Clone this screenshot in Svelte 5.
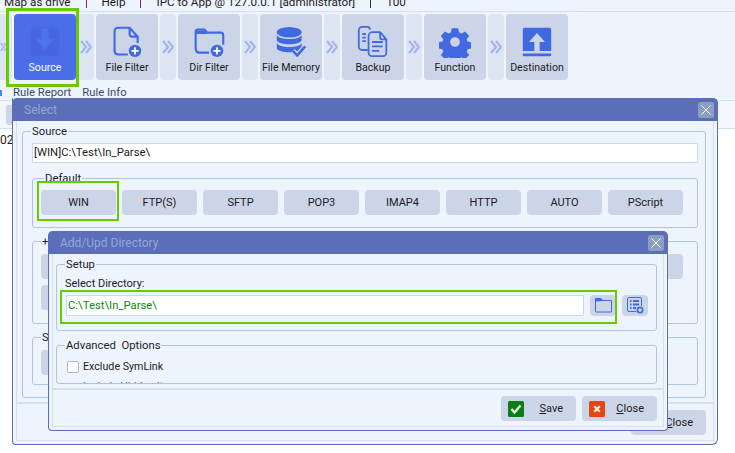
<script lang="ts">
	// Pipeline tiles along the top of the rule editor
	const tiles = [
		{ id: 'source', label: 'Source', active: true },
		{ id: 'file', label: 'File Filter' },
		{ id: 'dir', label: 'Dir Filter' },
		{ id: 'memory', label: 'File Memory' },
		{ id: 'backup', label: 'Backup' },
		{ id: 'function', label: 'Function' },
		{ id: 'destination', label: 'Destination' }
	];

	const protocols = ['WIN', 'FTP(S)', 'SFTP', 'POP3', 'IMAP4', 'HTTP', 'AUTO', 'PScript'];

	let excludeSymlink = $state(false);
</script>

{#snippet chevron()}
	<svg width="12" height="14" viewBox="0 0 12 14" fill="none" stroke="#9fb3ee" stroke-width="2">
		<path d="M1 1l5 6-5 6M6 1l5 6-5 6" />
	</svg>
{/snippet}

{#snippet closeX()}
	<svg width="10" height="10" viewBox="0 0 10 10" stroke="#fff" stroke-width="1" fill="none">
		<path d="M0.5 0.5l9 9M9.5 0.5l-9 9" />
	</svg>
{/snippet}

<div class="page">
	<div class="top">
		<div class="menu">
			<span>Map as drive</span><i class="sep"></i>
			<span>Help</span><i class="sep"></i>
			<span>IPC to App @ 127.0.0.1 [administrator]</span><i class="sep dark"></i>
			<span>100</span>
		</div>

		<div class="toolbar">
			<div class="link first">{@render chevron()}</div>
			{#each tiles as tile, i}
				<div class="tile" class:active={tile.active}>
					<svg class="icon" width="32" height="32" viewBox="0 0 36 36">
						{#if tile.id === 'source'}
							<path fill="#4766de" d="M5 1h26v1H5zM5 3h26a3 3 0 0 1 3 3v25a3 3 0 0 1-3 3H5a3 3 0 0 1-3-3V6a3 3 0 0 1 3-3z" />
							<path fill="#4f73ea" d="M14 3h8v12h6L18 27 8 15h6z" />
						{:else if tile.id === 'file'}
							<path fill="none" stroke="#4169e1" stroke-width="2.400" d="M8 2h13l9 10v7M21 2v7a3 3 0 0 0 3 3h6M8 2a4 4 0 0 0-4 4v22a4 4 0 0 0 4 4h11" />
							<circle cx="27" cy="28" r="7" fill="#4169e1" />
							<path stroke="#fff" stroke-width="2" d="M23 28h8M27 24v8" />
						{:else if tile.id === 'dir'}
							<path fill="none" stroke="#4169e1" stroke-width="2.400" d="M18 30H7a4 4 0 0 1-4-4V6a2 2 0 0 1 2-2h8l3 3.500h15a3 3 0 0 1 3 3V21" />
							<path fill="#4169e1" d="M3 5h10l3 4H3z" />
							<circle cx="27" cy="28" r="7" fill="#4169e1" />
							<path stroke="#fff" stroke-width="2" d="M23 28h8M27 24v8" />
						{:else if tile.id === 'memory'}
							<ellipse cx="16" cy="7" rx="14" ry="6" fill="#4169e1" />
							<path fill="#4169e1" d="M2 10c2 6 26 6 28 0v6c-2 6-26 6-28 0zM2 19c2 6 26 6 28 0v6c-2 6-26 6-28 0z" />
							<path fill="none" stroke="#ccd5e7" stroke-width="6" d="M20 28l5 5 9-10" />
							<path fill="none" stroke="#4169e1" stroke-width="3" d="M20 28l5 5 9-10" />
						{:else if tile.id === 'backup'}
							<path fill="none" stroke="#4169e1" stroke-width="2" d="M12 27H6a4 4 0 0 1-4-4V5a4 4 0 0 1 4-4h7l2 3" />
							<path fill="none" stroke="#4169e1" stroke-width="2" d="M6 9h4M6 13h4M6 17h4" />
							<path fill="none" stroke="#4169e1" stroke-width="2" d="M17 7h9l7 8v15a4 4 0 0 1-4 4H17a4 4 0 0 1-4-4V11a4 4 0 0 1 4-4zM26 8v5a2 2 0 0 0 2 2h5" />
							<path fill="none" stroke="#4169e1" stroke-width="2" d="M17 18h12M17 23h12M17 28h8" />
						{:else if tile.id === 'function'}
							<path fill="#4169e1" fill-rule="evenodd" d="M14 1h8l1 5 3 1.500 4.500-2.500 5 5.500-3 4 1 3 4.500 1v7.500l-4.500 1-1 3 3 4-5 5.500-4.500-2.500-3 1.500-1 5h-8l-1-5-3-1.500-4.500 2.500-5-5.500 3-4-1-3-4.500-1v-7.500l4.500-1 1-3-3-4 5-5.500 4.500 2.500 3-1.500zM18 12a6 6 0 1 0 0 12 6 6 0 0 0 0-12z" transform="translate(1.600 1.600) scale(.91)" />
						{:else}
							<path fill="#4169e1" fill-rule="evenodd" d="M4 2h28a2 2 0 0 1 2 2v24H21V18h6L18 8 9 18h6v10H2V4a2 2 0 0 1 2-2z" />
							<path fill="#4169e1" d="M2 31h32v1.500a1.500 1.500 0 0 1-1.500 1.500h-29A1.500 1.500 0 0 1 2 32.500z" />
						{/if}
					</svg>
					<span>{tile.label}</span>
				</div>
				{#if i < tiles.length - 1}
					<div class="link">{@render chevron()}</div>
				{/if}
			{/each}
		</div>

		<div class="tabs">
			<span class="tab-edge"></span>
			<span>Rule Report</span>
			<span>Rule Info</span>
		</div>
	</div>

	<div class="subbar"><span class="sub-btn"></span></div>
	<div class="log">02</div>

	<!-- Green boxes are call-outs drawn over the screenshot -->
	<div class="mark mark-source"></div>

	<section class="dialog select">
		<header>
			<span>Select</span>
			<button type="button" class="x">{@render closeX()}</button>
		</header>
		<div class="frame">
			<div class="content">
				<div class="group outer">
					<span class="legend">Source</span>
					<div class="input source-input">[WIN]C:\Test\In_Parse\</div>

					<div class="group default">
						<span class="legend">Default</span>
						<div class="proto-row">
							{#each protocols as p}
								<button type="button" class="btn proto">{p}</button>
							{/each}
						</div>
					</div>

					<div class="group plus">
						<span class="legend">+</span>
						<div class="proto-row">
							{#each protocols as p}
								<span class="btn proto"></span>
							{/each}
						</div>
						<div class="proto-row second"><span class="btn proto"></span></div>
					</div>

					<div class="group third">
						<span class="legend">S</span>
						<div class="proto-row"><span class="btn proto"></span></div>
					</div>
				</div>
			</div>
			<footer>
				<button type="button" class="btn wide"><span class="caption"><u>C</u>lose</span></button>
			</footer>
		</div>
		<div class="mark mark-win"></div>
	</section>

	<section class="dialog directory">
		<header>
			<span>Add/Upd Directory</span>
			<button type="button" class="x">{@render closeX()}</button>
		</header>
		<div class="frame">
			<div class="content">
				<div class="group setup">
					<span class="legend">Setup</span>
					<div class="field-label">Select Directory:</div>
					<div class="dir-row">
						<div class="input dir-input">C:\Test\In_Parse\</div>
						<button type="button" class="btn square">
							<svg width="17" height="15" viewBox="0 0 17 15" fill="#ccd5e7" stroke="#4169e1" stroke-width="1">
								<path d="M.5 2.500h15.500a.5.5 0 0 1 .5.5v11H1a.5.5 0 0 1-.5-.5z" />
								<path fill="#4169e1" d="M.5 3V.5h5.500l1.500 2z" />
							</svg>
						</button>
						<button type="button" class="btn square">
							<svg width="17" height="17" viewBox="0 0 17 17" fill="none" stroke="#4169e1" stroke-width="1">
								<path d="M9 14.500H2a1.500 1.500 0 0 1-1.500-1.500V2A1.500 1.500 0 0 1 2 .5h11A1.500 1.500 0 0 1 14.500 2v7" />
								<path stroke-width="2" d="M3 4h1.500M6 4h6M3 7.500h1.500M6 7.500h6M3 11h1.500M6 11h3" />
								<circle cx="13" cy="13" r="3.500" fill="#4169e1" stroke="none" />
								<path stroke="#fff" d="M11 13h4M13 11v4" />
							</svg>
						</button>
					</div>
				</div>

				<div class="group advanced">
					<span class="legend">Advanced&nbsp; Options</span>
					<div class="rows">
						<label class="check">
							<input type="checkbox" bind:checked={excludeSymlink} />
							<span>Exclude SymLink</span>
						</label>
						<div class="check clipped">Include Hidden Items</div>
					</div>
				</div>
			</div>
			<footer>
				<button type="button" class="btn wide">
					<svg class="state" width="16" height="16" viewBox="0 0 16 16">
						<rect width="16" height="16" rx="1.500" fill="#0a7d14" />
						<path d="M3.500 8l3 3.500 6-7" fill="none" stroke="#e6efe6" stroke-width="2.400" />
					</svg>
					<span class="caption"><u>S</u>ave</span>
				</button>
				<button type="button" class="btn wide">
					<svg class="state" width="16" height="16" viewBox="0 0 16 16">
						<rect width="16" height="16" rx="1.500" fill="#e4460f" />
						<path d="M5.200 5.200l5.600 5.600M10.800 5.200l-5.600 5.600" fill="none" stroke="#f6e6e0" stroke-width="2.200" />
					</svg>
					<span class="caption"><u>C</u>lose</span>
				</button>
			</footer>
		</div>
		<div class="mark mark-dir"></div>
	</section>
</div>

<style>
	:global(body) {
		margin: 0;
		background: #fff;
	}

	.page {
		position: relative;
		width: 735px;
		height: 453px;
		overflow: hidden;
		background: #fff;
		font-family: Roboto, 'Liberation Sans', sans-serif;
		font-size: 11px;
		color: #1c1c1c;
	}

	.top {
		background: #eef4fc;
	}

	.menu {
		height: 11px;
		display: flex;
		align-items: flex-end;
		padding-left: 4px;
		overflow: hidden;
		border-bottom: 1px solid #d3e0f0;
		line-height: 16px;
		font-size: 11.7px;
	}

	.menu span {
		flex: none;
		padding-bottom: 1px;
	}

	.sep {
		flex: none;
		width: 1px;
		height: 8px;
		margin: 0 15px 3px;
		background: #7a2a5a;
	}

	.sep.dark {
		background: #333;
	}

	.toolbar {
		display: flex;
		gap: 2px;
		height: 66px;
		margin-top: 2px;
	}

	.link {
		width: 16px;
		display: flex;
		align-items: center;
		justify-content: center;
		background: #dde4f2;
		border-radius: 4px;
	}

	.link.first {
		width: 12px;
		box-sizing: border-box;
		padding-right: 4px;
		justify-content: flex-end;
		border-radius: 0 4px 4px 0;
	}

	.tile {
		width: 62px;
		display: flex;
		flex-direction: column;
		align-items: center;
		padding-top: 12px;
		box-sizing: border-box;
		background: #ccd5e7;
		border-radius: 4px;
		white-space: nowrap;
		font-size: 10.6px;
		line-height: 15px;
	}

	.tile.active {
		background: #4a6ee8;
		color: #fff;
	}

	.icon {
		flex: none;
		margin-bottom: 2px;
	}

	.tabs {
		height: 20px;
		box-sizing: border-box;
		padding-top: 6px;
		display: flex;
		gap: 11px;
		padding-left: 13px;
		color: #3b4a66;
		line-height: 14px;
		font-size: 11.3px;
	}

	.tab-edge {
		position: absolute;
		left: 0;
		top: 90px;
		width: 2px;
		height: 6px;
		background: #3d8bf0;
	}

	.subbar {
		height: 29px;
		box-sizing: border-box;
		background: #f3f7fd;
		border-top: 1px solid #d3e0f0;
		border-bottom: 1px solid #d3e0f0;
		padding: 4px 0 0 6px;
	}

	.sub-btn {
		display: block;
		width: 30px;
		height: 20px;
		background: #ccd5e7;
		border-radius: 3px;
	}

	.log {
		padding-top: 3px;
		line-height: 16px;
		font-size: 12px;
	}

	.mark {
		position: absolute;
		box-sizing: border-box;
		border: 2px solid #66cc00;
		pointer-events: none;
	}

	.mark-source {
		left: 6px;
		top: 8px;
		width: 73px;
		height: 79px;
		border-width: 3px;
	}

	.mark-win {
		left: 24px;
		top: 83px;
		width: 82px;
		height: 40px;
	}

	.mark-dir {
		left: 11px;
		top: 59px;
		width: 557px;
		height: 34px;
	}

	/* Windows stacked on the desktop of the app */
	.dialog {
		position: absolute;
		box-sizing: border-box;
		display: flex;
		flex-direction: column;
		background: #eef4fc;
		border: 1px solid #5a6eb9;
		border-top: 0;
		border-radius: 0 6px 6px 4px;
	}

	.select {
		left: 12px;
		top: 98px;
		width: 706px;
		height: 347px;
	}

	.directory {
		left: 48px;
		top: 231px;
		width: 620px;
		height: 200px;
		border-radius: 5px 6px 4px 4px;
	}

	header {
		flex: none;
		height: 23px;
		margin: 0 -1px;
		padding: 0 4px 0 12px;
		display: flex;
		align-items: center;
		justify-content: space-between;
		background: #5a6eb9;
		border-radius: 5px 5px 0 0;
		color: #98a6d6;
		font-size: 12px;
	}

	.x {
		width: 16px;
		height: 16px;
		padding: 0;
		border: 0;
		border-radius: 2px;
		display: flex;
		align-items: center;
		justify-content: center;
		background: #8d9fc0;
	}

	.frame {
		flex: 1;
		min-height: 0;
		margin: 0 3px 3px;
		display: flex;
		flex-direction: column;
		border-left: 1px solid #d3e0f0;
		border-right: 1px solid #d3e0f0;
		border-bottom: 1px solid #d3e0f0;
	}

	.content {
		flex: 1;
		min-height: 0;
		padding: 10px 6px 0 3px;
	}

	.select .content {
		padding: 10px 7px 0 5px;
	}

	footer {
		flex: none;
		display: flex;
		justify-content: flex-end;
		gap: 6px;
		height: 38px;
		box-sizing: border-box;
		padding: 6px 6px 0 0;
		border-top: 2px solid #d3e0f0;
	}

	.select footer {
		padding-right: 7px;
	}

	.group {
		position: relative;
		box-sizing: border-box;
		border: 1px solid #b0c4de;
		border-radius: 3px;
	}

	.legend {
		position: absolute;
		left: 8px;
		top: -8px;
		padding: 0 1px;
		background: #eef4fc;
		line-height: 16px;
		font-size: 11.3px;
		color: #1c1c1c;
	}

	.default .legend {
		left: 11px;
	}

	.outer {
		height: 267px;
		padding: 11px 7px 0 9px;
	}

	.input {
		box-sizing: border-box;
		background: #fff;
		border: 1px solid #c9d8ec;
		border-radius: 1px;
		line-height: 18px;
		padding-left: 1px;
		font-size: 11.3px;
	}

	.source-input {
		height: 20px;
	}

	.default,
	.plus,
	.third {
		padding: 11px 13px 0 8px;
	}

	.default {
		height: 50px;
		margin-top: 15px;
	}

	.plus {
		height: 83px;
		margin-top: 13px;
		padding-top: 12px;
	}

	.third {
		height: 48px;
		margin-top: 13px;
		padding-top: 12px;
	}

	.proto-row {
		display: flex;
		gap: 6px;
	}

	.proto-row.second {
		margin-top: 6px;
	}

	.btn {
		box-sizing: border-box;
		padding: 0;
		border: 0;
		border-radius: 4px;
		background: #ccd5e7;
		font: inherit;
		color: inherit;
	}

	.proto {
		display: block;
		flex: none;
		width: 75px;
		height: 25px;
	}

	.setup {
		height: 67px;
		padding: 12px 8px 0 9px;
	}

	.field-label {
		margin-left: -1px;
		line-height: 14px;
		font-size: 11px;
	}

	.dir-row {
		display: flex;
		gap: 6px;
		margin-top: 4px;
		height: 21px;
	}

	.dir-input {
		flex: none;
		width: 518px;
		height: 21px;
		color: #0a8a10;
		line-height: 19px;
	}

	.square {
		flex: none;
		width: 26px;
		height: 21px;
		display: flex;
		align-items: center;
		justify-content: center;
	}

	.advanced {
		height: 39px;
		margin-top: 14px;
		padding: 13px 0 0 10px;
	}

	.rows {
		height: 24px;
		overflow: hidden;
	}

	.check {
		display: flex;
		align-items: center;
		gap: 4px;
		height: 16px;
		line-height: 16px;
		font-size: 10.7px;
	}

	.check.clipped {
		margin: 4px 0 0 16px;
		color: #555;
	}

	.check input {
		appearance: none;
		box-sizing: border-box;
		width: 12px;
		height: 12px;
		margin: 0;
		background: #fff;
		border: 1px solid #a9b8cf;
		border-radius: 2px;
	}

	.wide {
		flex: none;
		width: 75px;
		height: 25px;
		display: flex;
		align-items: center;
		padding: 0 13px 0 7px;
	}

	.state {
		flex: none;
	}

	.caption {
		margin-left: auto;
	}
</style>
